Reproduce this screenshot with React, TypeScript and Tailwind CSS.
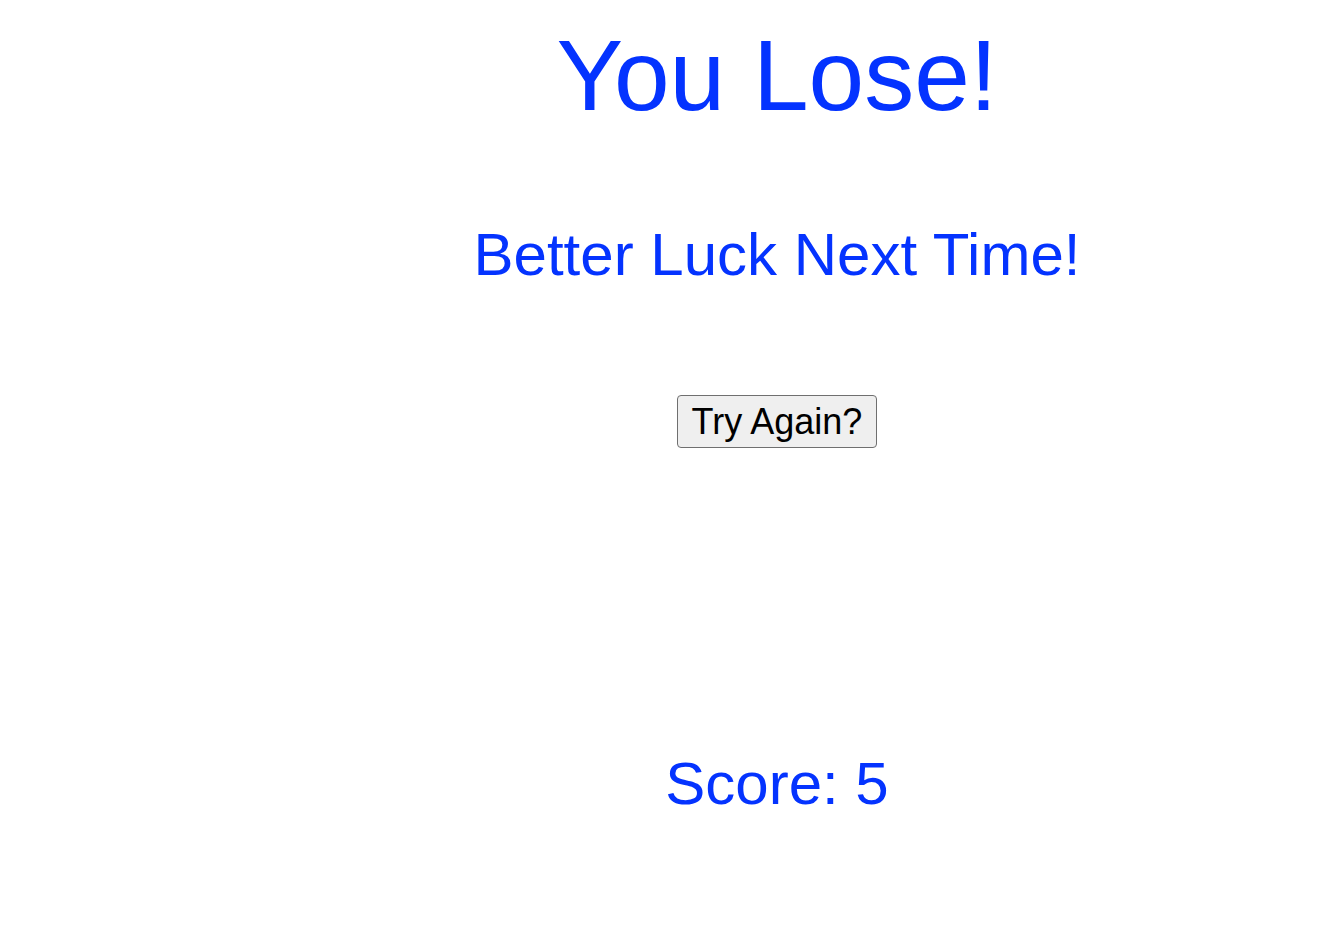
export default function App() {
  return (
    <div className="min-h-screen bg-white pl-[214px] font-['Liberation_Sans',Arial,sans-serif]">
      <div className="flex flex-col items-center text-center">
        <h1 className="mt-[19px] text-[100px] leading-[112px] text-[#0433ff]">You Lose!</h1>
        <h2 className="mt-[90px] text-[60px] leading-[67px] text-[#0433ff]">Better Luck Next Time!</h2>
        <button className="mt-[107px] h-[53px] px-[14px] rounded-[4px] border border-[#6f6f6f] bg-[#efefef] text-[36px] leading-[40px] text-black">
          Try Again?
        </button>
        <p className="mt-[302px] text-[60px] leading-[67px] text-[#0433ff]">Score: 5</p>
      </div>
    </div>
  );
}
